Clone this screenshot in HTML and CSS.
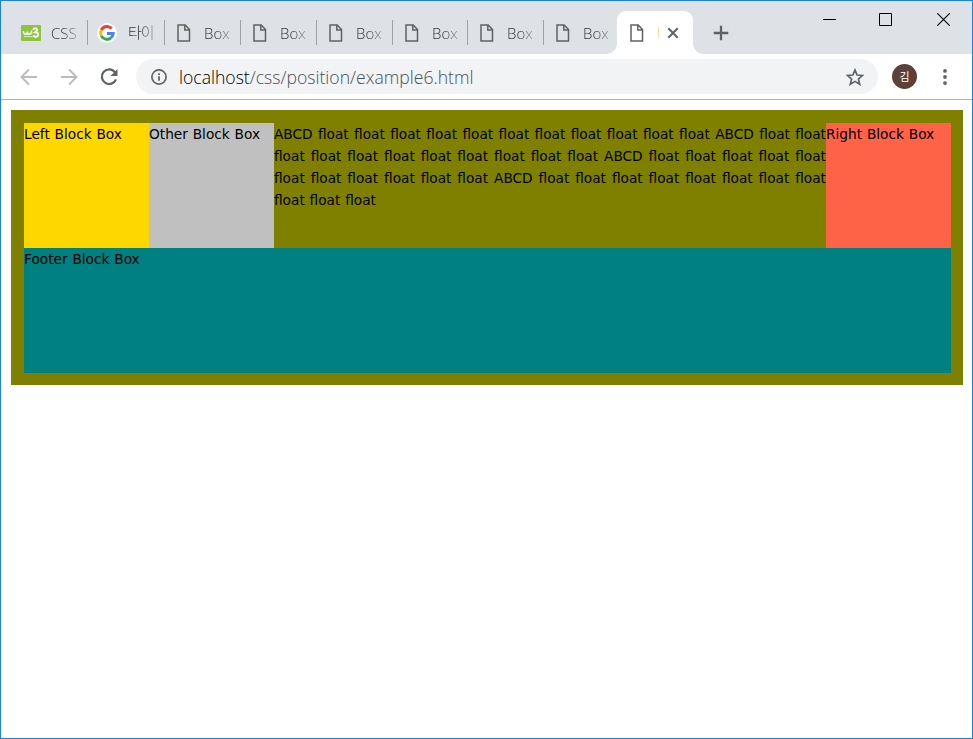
FILE: index.html
```html
<!DOCTYPE html>
<html lang="ko">
<head>
<meta charset="utf-8">
<title>Box</title>
<link rel="stylesheet" href="styles.css">
</head>
<body>
<svg class="defs" width="0" height="0">
  <symbol id="page" viewBox="0 0 20 20"><path d="M4 2.1h7.2l4.3 4.5v11.3H4z M10.8 2.1v5h4.7" fill="none" stroke="#616161" stroke-width="1.5"/></symbol>
</svg>
<div class="window">
  <header class="strip">
    <nav class="tabs">
      <div class="tab">
        <svg class="icon" viewBox="0 0 20 20"><rect y="2" width="20" height="16" rx="1" fill="#8bc63e"/><path d="M2.300 8q.3 3.300 2.200 3.300Q6.300 11.300 6.300 8.500q0 2.800 2 2.800 2.200 0 2.200-3.800" fill="none" stroke="#fff" stroke-width="1.500"/><path d="M12 6.800q1.500-2 3.300-1.300 2.600 1.400-1.300 3.900 4.800.2 2.600 3.600-2 1.800-4.400-.2" fill="none" stroke="#fff" stroke-width="1.900"/><path d="M3 13.600h8.500" stroke="#d9efba" stroke-width="1"/></svg>
        <span class="title">CSS</span>
      </div>
      <div class="tab">
        <svg class="icon" viewBox="0 0 20 20"><circle cx="10" cy="10" r="10" fill="#fff"/><g fill="none" stroke-width="3"><path d="M14.7 5.5A6.3 6.3 0 0 0 4.3 7.2" stroke="#ea4335"/><path d="M4.3 7.2a6.3 6.3 0 0 0 0 5.6" stroke="#fbbc05"/><path d="M4.3 12.8a6.3 6.3 0 0 0 9.7 2" stroke="#34a853"/><path d="M14 14.8q2.2-1.8 2.200-4.300H10" stroke="#4285f4"/></g></svg>
        <span class="title hangul">타이</span>
      </div>
      <div class="tab"><svg class="icon"><use href="#page"/></svg><span class="title">Box</span></div>
      <div class="tab"><svg class="icon"><use href="#page"/></svg><span class="title">Box</span></div>
      <div class="tab"><svg class="icon"><use href="#page"/></svg><span class="title">Box</span></div>
      <div class="tab"><svg class="icon"><use href="#page"/></svg><span class="title">Box</span></div>
      <div class="tab"><svg class="icon"><use href="#page"/></svg><span class="title">Box</span></div>
      <div class="tab"><svg class="icon"><use href="#page"/></svg><span class="title">Box</span></div>
      <div class="tab active"><svg class="icon"><use href="#page"/></svg><i class="sliver"></i><svg class="close" viewBox="0 0 12 12"><path d="M1.3 1.3l9.4 9.4M10.700 1.300l-9.400 9.400" stroke="#5f6368" stroke-width="2"/></svg></div>
    </nav>
    <svg class="plus" viewBox="0 0 16 16"><path d="M8 .7v14.600M.7 8h14.600" stroke="#5f6368" stroke-width="2.300"/></svg>
    <div class="controls">
      <svg width="13" height="13"><path d="M0 6.5h13" stroke="#000"/></svg>
      <svg width="13" height="13"><path d="M.5.5h12v12H.5z" fill="none" stroke="#000"/></svg>
      <svg width="13" height="13"><path d="M.3.3l12.400 12.400M12.700.3L.3 12.700" stroke="#000" stroke-width="1.100"/></svg>
    </div>
  </header>
  <div class="toolbar">
    <svg class="nav" viewBox="0 0 18 18"><path d="M17 9H2M9 1.500L1.500 9 9 16.500" fill="none" stroke="#babcbe" stroke-width="2"/></svg>
    <svg class="nav" viewBox="0 0 18 18"><path d="M1 9h15M9 1.500L16.500 9 9 16.500" fill="none" stroke="#babcbe" stroke-width="2"/></svg>
    <svg class="nav" viewBox="0 0 18 18"><path d="M15 4.300A7.300 7.300 0 1 0 16 11.300" fill="none" stroke="#5f6368" stroke-width="2.200"/><path d="M17.500 1v7h-7z" fill="#5f6368"/></svg>
    <div class="address">
      <svg class="info" viewBox="0 0 16 16"><circle cx="8" cy="8" r="7.100" fill="none" stroke="#5f6368" stroke-width="1.700"/><path d="M8 7.200v4.600M8 4.200v1.700" stroke="#5f6368" stroke-width="1.800"/></svg>
      <span class="url"><b>localhost</b>/css/position/example6.html</span>
      <svg class="star" viewBox="0 0 18 18"><path d="M9 2l2.100 5 5.400.500-4.100 3.500 1.300 5.300L9 13.400l-4.700 2.900L5.600 11 1.500 7.500 6.900 7z" fill="none" stroke="#5f6368" stroke-width="1.700"/></svg>
    </div>
    <span class="avatar">김</span>
    <svg class="dots" viewBox="0 0 4 16"><circle cx="2" cy="1.900" r="1.900"/><circle cx="2" cy="8" r="1.900"/><circle cx="2" cy="14.100" r="1.900"/></svg>
  </div>
  <main class="container">
    <div class="box left">Left Block Box</div>
    <div class="box other">Other Block Box</div>
    <p class="copy">ABCD float float float float float float float float float float float ABCD float float float float float float float float float float float ABCD float float float float float float float float float float float ABCD float float float float float float float float float float float</p>
    <div class="box right">Right Block Box</div>
    <div class="footer">Footer Block Box</div>
  </main>
</div>
</body>
</html>
```
FILE: styles.css
```css
* { box-sizing: border-box; }
body { margin: 0; background: #fff; overflow: hidden; }
svg { display: block; flex: none; }
.defs { position: absolute; }
.window { height: 739px; border: 1px solid #1883d7; }

.strip {
  display: flex;
  height: 53px;
  padding-left: 11px;
  background: #dee1e6;
  font: 300 15px "Open Sans", "Noto Sans CJK KR", sans-serif;
  color: #303438;
}
.tabs {
  display: grid;
  grid-template-columns: 76px 77px 76px 76px 76px 75px 76px 73px 76px;
  padding-top: 10px;
}
.tab {
  display: flex;
  align-items: center;
  height: 43px;
  padding-left: 9px;
  background: linear-gradient(#9fa2a6, #9fa2a6) right 9px / 1px 25px no-repeat;
}
.tab:nth-child(n+8) { background: none; }
.icon { width: 20px; height: 20px; }
.title {
  margin-left: 10px;
  white-space: nowrap;
  line-height: 22px;
  -webkit-mask-image: linear-gradient(90deg, #000 40%, rgba(0, 0, 0, .4));
  mask-image: linear-gradient(90deg, #000 40%, rgba(0, 0, 0, .4));
}
.hangul { margin-left: 11px; font-size: 15px; letter-spacing: -1px; padding-bottom: 2px; }
.tab.active {
  position: relative;
  padding-left: 10px;
  background: #fff;
  border-radius: 9px 9px 0 0;
}
.tab.active::before, .tab.active::after {
  content: "";
  position: absolute;
  bottom: 0;
  width: 10px;
  height: 10px;
}
.tab.active::before { left: -10px; background: radial-gradient(circle at 0 0, transparent 9.5px, #fff 10px); }
.tab.active::after { right: -10px; background: radial-gradient(circle at 100% 0, transparent 9.5px, #fff 10px); }
.sliver { width: 1px; height: 11px; margin-left: 11px; background: #fbdca0; }
.close { width: 12px; height: 12px; margin-left: 8px; }
.plus { width: 16px; height: 16px; margin: 24px 0 0 20px; }
.controls { display: flex; gap: 45px; margin: 12px 22px 0 auto; }
.controls svg:first-child { margin-right: -2px; }

.toolbar {
  display: flex;
  align-items: center;
  height: 46px;
  padding: 0 25px 0 19px;
  border-bottom: 1px solid #b0b2b4;
}
.nav { width: 18px; height: 18px; margin-right: 22px; }
.nav:nth-child(3) { margin-right: 18px; }
.address {
  display: flex;
  align-items: center;
  width: 742px;
  height: 35px;
  padding: 0 14px 0 15px;
  border-radius: 18px;
  background: #f1f3f4;
}
.info { width: 16px; height: 16px; }
.url {
  margin-left: 12px;
  font: 300 17.6px/24px "Open Sans", sans-serif;
  color: #4c5156;
  white-space: nowrap;
}
.url b { font-weight: 300; color: #000; }
.star { width: 18px; height: 18px; margin-left: auto; }
.avatar {
  width: 25px;
  height: 25px;
  margin-left: 14px;
  border-radius: 50%;
  background: #5d4037;
  color: #fff;
  font: 11px/24px "Noto Sans CJK KR", sans-serif;
  text-align: center;
}
.dots { width: 4px; height: 16px; margin-left: auto; fill: #5f6368; }

.container {
  display: grid;
  grid-template-columns: 125px 125px 1fr 125px;
  grid-template-rows: 125px 125px;
  margin: 10px 9px 0 10px;
  padding: 13px 12px 12px 13px;
  background: olive;
  font: 13.7px/22px "DejaVu Sans", Verdana, sans-serif;
  word-spacing: .5px;
  color: #000;
}
.left { background: gold; }
.other { background: silver; }
.copy { margin: 0; text-align: justify; }
.right { background: tomato; }
.footer { grid-column: 1 / -1; background: teal; }
```
